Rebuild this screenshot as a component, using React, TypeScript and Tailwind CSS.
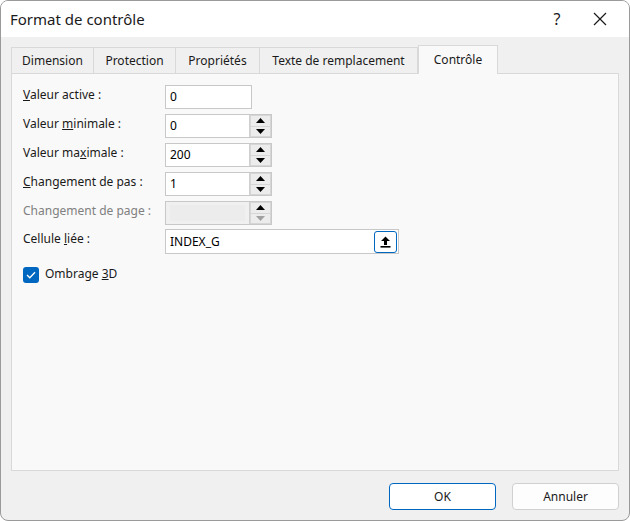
import * as React from 'react'

const font = { fontFamily: '"Noto Sans", "Open Sans", sans-serif' }

function Spinner({ disabled }: { disabled?: boolean }) {
  const c = disabled ? '#a0a0a0' : '#000'
  return (
    <div className="flex h-full w-[22px] flex-col gap-[1px] border-l border-[#cfcfcf] bg-[#d6d6d6] p-[1px]">
      <div className="flex flex-1 items-center justify-center bg-[#ececec]">
        <svg width="9" height="5" viewBox="0 0 9 5"><path d="M4.5 0 L9 5 L0 5 Z" fill="#000" /></svg>
      </div>
      <div className="flex flex-1 items-center justify-center bg-[#ececec]">
        <svg width="9" height="5" viewBox="0 0 9 5"><path d="M0 0 L9 0 L4.5 5 Z" fill={c} /></svg>
      </div>
    </div>
  )
}

function Row({ label, value, spin, disabled, width = 'w-[107px]' }: { label: React.ReactNode; value?: string; spin?: boolean; disabled?: boolean; width?: string }) {
  return (
    <div className="flex h-[24px] items-center">
      <div className={`w-[142px] pb-[5px] text-[12px] ${disabled ? 'text-[#808080]' : 'text-[#1a1a1a]'}`}>{label}</div>
      <div className={`flex h-[24px] ${width} border border-[#c8c8c8] ${disabled ? 'bg-[#f0f0f0]' : 'bg-white'}`}>
        <div className="flex flex-1 items-center px-[4px] text-[12px] text-black">
          {disabled ? <div className="h-[16px] w-full bg-[#ececec]" /> : value}
        </div>
        {spin && <Spinner disabled={disabled} />}
      </div>
    </div>
  )
}

export default function App() {
  const tabs = ['Dimension', 'Protection', 'Propriétés', 'Texte de remplacement']
  const tabW = ['w-[83px]', 'w-[82px]', 'w-[84px]', 'w-[158px]']
  return (
    <div style={font} className="flex h-[521px] w-[630px] flex-col overflow-hidden rounded-[8px] border border-[#9a9a9a] bg-[#f0f0f0]">
      {/* title bar */}
      <div className="flex h-[36px] shrink-0 items-center bg-white pl-[9px]">
        <div className="flex-1 text-[15px] text-[#1a1a1a]">Format de contrôle</div>
        <div className="w-[40px] text-center text-[16px] text-[#1a1a1a]">?</div>
        <div className="flex w-[52px] items-center justify-center pr-[6px]">
          <svg width="14" height="14" viewBox="0 0 14 14"><path d="M1 1 L13 13 M13 1 L1 13" stroke="#1a1a1a" strokeWidth="1.2" /></svg>
        </div>
      </div>

      {/* tabs */}
      <div className="mt-[8px] flex h-[28px] items-end pl-[10px]">
        {tabs.map((t, i) => (
          <div key={t} className={`flex h-[26px] ${tabW[i]} items-center justify-center border border-b-0 border-[#d9d9d9] ${i > 0 ? 'border-l-0' : ''} pt-[1px] text-[12px] text-[#1a1a1a]`}>
            {t}
          </div>
        ))}
        <div className="relative z-10 -mb-[1px] flex h-[29px] w-[80px] items-center justify-center border border-b-0 border-[#d9d9d9] bg-[#f9f9f9] pb-[1px] text-[12px] text-[#1a1a1a]">
          Contrôle
        </div>
      </div>

      {/* panel */}
      <div className="mx-[10px] flex h-[398px] w-[608px] flex-col gap-[5px] border border-[#d9d9d9] bg-[#f9f9f9] px-[11px] pt-[11px]">
        <Row label={<><span className="underline">V</span>aleur active :</>} value="0" width="w-[87px]" />
        <Row label={<>Valeur <span className="underline">m</span>inimale :</>} value="0" spin />
        <Row label={<>Valeur ma<span className="underline">x</span>imale :</>} value="200" spin />
        <Row label={<><span className="underline">C</span>hangement de pas :</>} value="1" spin />
        <Row label="Changement de page :" spin disabled />
        <div className="-mt-[1px] flex h-[25px] items-center">
          <div className="w-[142px] pb-[5px] text-[12px] text-[#1a1a1a]">Cellule <span className="underline">l</span>iée :</div>
          <div className="flex h-[25px] w-[234px] items-center border border-[#c8c8c8] bg-white">
            <div className="flex-1 px-[4px] text-[12px] text-black">INDEX_G</div>
            <div className="mr-[1px] flex h-[22px] w-[23px] items-center justify-center rounded-[3px] border-[1.5px] border-[#0067c0] bg-white">
              <svg width="11" height="12" viewBox="0 0 11 12">
                <path d="M5.5 0.5 L10 5 L7 5 L7 9 L4 9 L4 5 L1 5 Z" fill="#000" />
                <rect x="0.5" y="10" width="10" height="1.6" fill="#000" />
              </svg>
            </div>
          </div>
        </div>
        <div className="mt-[6px] flex items-center gap-[6px]">
          <div className="flex h-[16px] w-[16px] items-center justify-center rounded-[3px] bg-[#0067c0]">
            <svg width="10" height="8" viewBox="0 0 10 8"><path d="M1 4 L3.8 6.8 L9 1.2" stroke="#fff" strokeWidth="1.3" fill="none" /></svg>
          </div>
          <div className="pb-[1px] text-[12px] text-[#1a1a1a]">Ombrage <span className="underline">3</span>D</div>
        </div>
      </div>

      {/* buttons */}
      <div className="mt-[12px] flex justify-end gap-[16px] pr-[10px]">
        <div className="flex h-[27px] w-[107px] items-center justify-center rounded-[4px] border border-[#0067c0] bg-white text-[12px] text-[#1a1a1a]">OK</div>
        <div className="flex h-[27px] w-[107px] items-center justify-center rounded-[4px] border border-[#d0d0d0] bg-[#fdfdfd] text-[12px] text-[#1a1a1a]">Annuler</div>
      </div>
    </div>
  )
}
